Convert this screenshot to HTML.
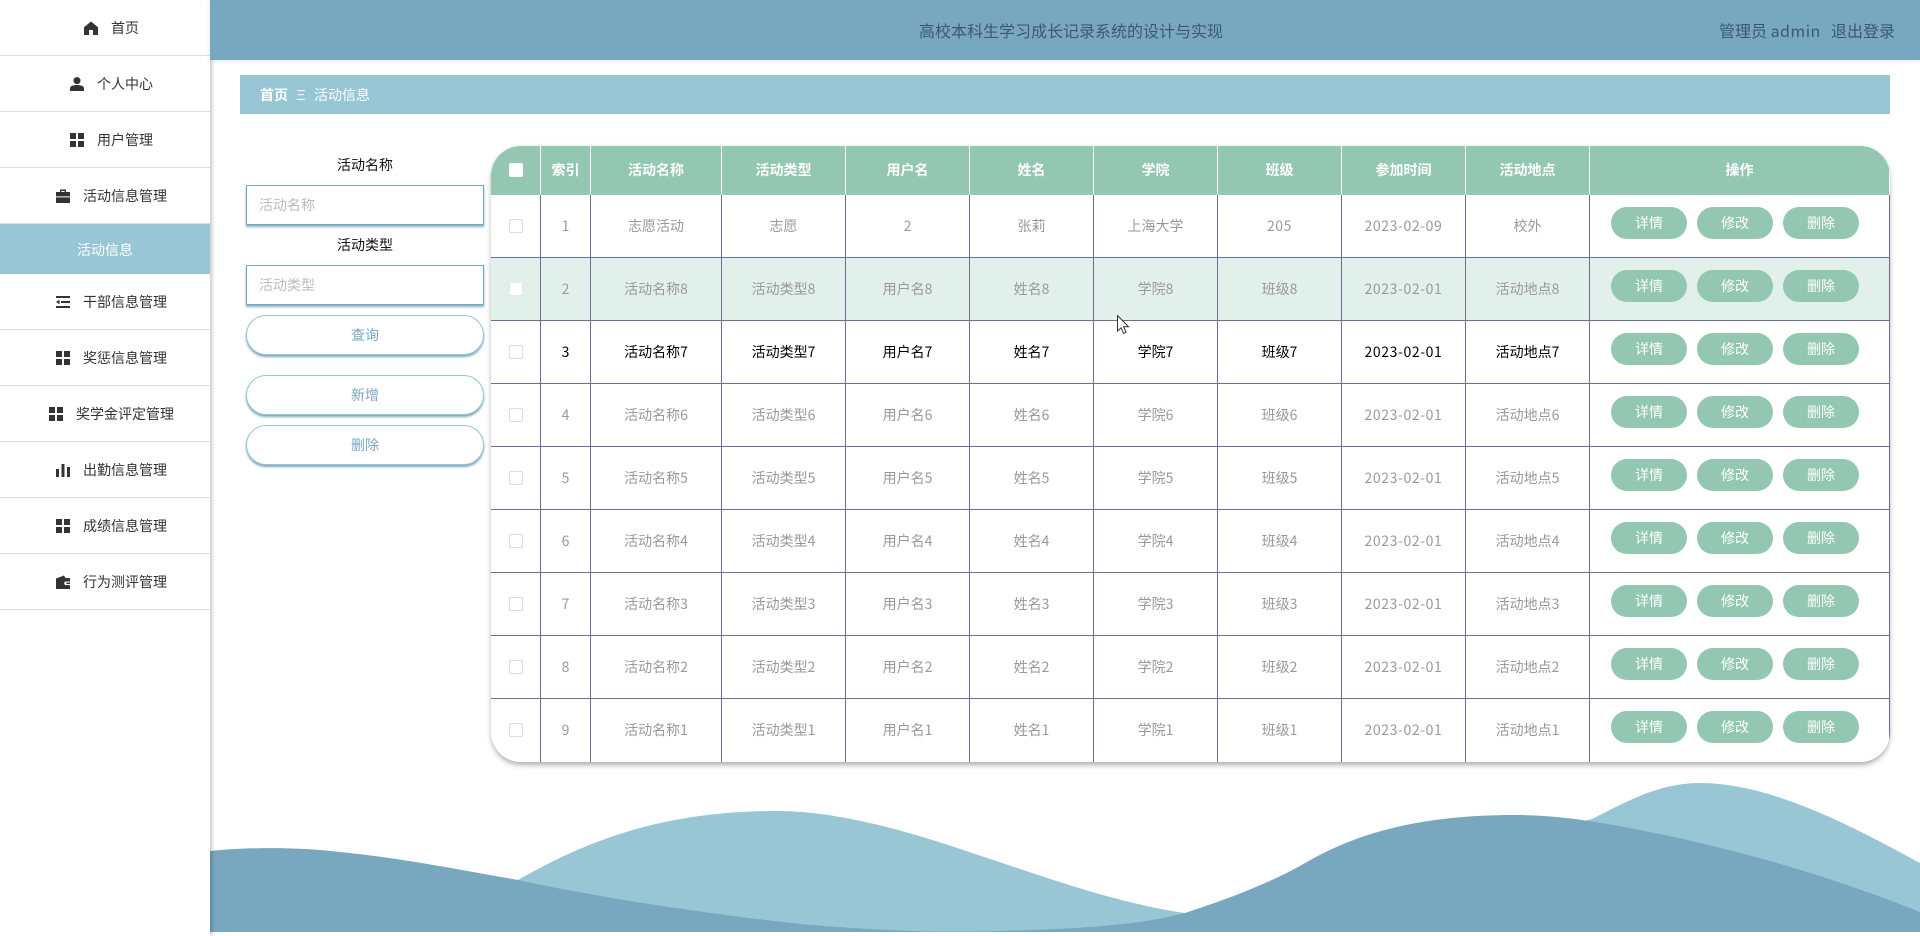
<!DOCTYPE html>
<html lang="zh-CN">
<head>
<meta charset="utf-8">
<title>活动信息</title>
<style>
*{box-sizing:border-box;margin:0;padding:0}
html,body{width:1920px;height:936px;overflow:hidden;background:#fff}
body{position:relative;font-family:"Noto Sans CJK SC","Liberation Sans",sans-serif;font-size:14px;color:#333}
.side{position:absolute;left:0;top:0;width:210px;height:936px;background:#fff;box-shadow:2px 0 4px rgba(0,0,0,.22);z-index:3}
.it{height:56px;border-bottom:1px solid #dcdcdc;display:flex;align-items:center;justify-content:center;padding-left:13px;color:#333;line-height:20px}
.it svg{width:14px;height:14px;margin-right:13px;fill:#333;flex:none}
.it.on{height:50px;background:#98c6d4;color:#fff;border:0;padding-left:0;padding-top:1px}
.top{position:absolute;left:210px;top:0;width:1710px;height:60px;background:#78a8c0;box-shadow:0 1px 4px rgba(120,168,192,.25);z-index:4;color:#3d5872;font-size:16px;line-height:60px}
.top .t{position:absolute;left:709px;top:0;white-space:nowrap}
.top .a{position:absolute;left:1509px;top:0;white-space:nowrap}
.top .a i{font-style:normal;letter-spacing:.45px}
.top .b{position:absolute;left:1621px;top:0;white-space:nowrap}
.crumb{position:absolute;left:240px;top:75px;width:1650px;height:39px;background:#98c6d4;color:#fff;line-height:41px}
.crumb span{position:absolute;top:0;white-space:nowrap}
.lab{position:absolute;left:246px;width:238px;text-align:center;color:#111;line-height:20px}
.inp{position:absolute;left:246px;width:238px;height:40px;border:1px solid #78a8c0;box-shadow:0 2px 2px rgba(120,168,192,.9);background:#fff;color:#bbb;line-height:38px;padding-left:12px}
.btn{position:absolute;left:246px;width:238px;height:40px;border:1px solid #98c6d4;border-radius:20px;box-shadow:0 2px 2px #78a8c0;background:#fff;color:#78a8c0;text-align:center;line-height:38px}
.box{position:absolute;left:491px;top:146px;width:1399px;height:616px;border-radius:30px;overflow:hidden;background:#fff}
.sh{position:absolute;left:491px;top:146px;width:1399px;height:616px;border-radius:30px;box-shadow:0 4px 6px -1px rgba(0,0,0,.3),0 0 5px rgba(0,0,0,.08)}
table{border-collapse:separate;border-spacing:0;table-layout:fixed;width:1399px}
th{height:49px;background:#93c7b1;color:#fff;font-weight:700;border-right:1px solid #fff;line-height:48px;padding:0;text-align:center;vertical-align:top}
td{height:63px;border-right:1px solid #6d6d90;border-bottom:1px solid #6d6d90;color:#999;text-align:center;line-height:62px;padding:0;vertical-align:top}
td.d{letter-spacing:.6px}
tr:last-child td{border-bottom:0}
tr.s td{background:#e2f0eb}
tr.h td{color:#000}
.c{display:inline-block;width:14px;height:14px;background:#fff;border:1px solid #dcdcdc;border-radius:2px;vertical-align:middle;margin-top:-2px}
tr.s .c{border-color:#e8e8e8}
th .c{border:0}
.ops{display:flex;padding:12px 0 0 21px;gap:10px}
.ops b{display:block;width:76px;height:32px;border-radius:16px;background:#93c7b1;color:#fff;font-weight:400;line-height:33px;text-align:center}
.wave{position:absolute;left:210px;top:760px;z-index:1}
.cur{position:absolute;left:1117px;top:315px;z-index:9}
</style>
</head>
<body>
<svg class="wave" width="1710" height="176" viewBox="210 760 1710 176">
<path fill="#98c6d4" d="M518 880C575 848 650 811 778 811C835 811 905 830 969 852C1040 875 1110 902 1185 913L1592 819C1630 800 1660 783 1700 783C1770 783 1850 825 1920 863V932H518Z"/>
<path fill="#78a8c0" d="M210 851C240 848 290 846 340 852C400 858 450 868 518 880C610 900 720 915 800 924C880 931 950 933 1000 931C1080 929 1140 925 1185 913C1225 900 1265 885 1300 866C1340 842 1400 815 1514 815C1560 815 1600 822 1650 832C1750 852 1840 880 1920 912V932H210Z"/>
</svg>

<div class="side">
<div class="it"><svg viewBox="0 0 14 14"><path d="M7 .5 14 6.2V14H9V9H5V14H0V6.2Z"/></svg>首页</div>
<div class="it"><svg viewBox="0 0 14 14"><circle cx="7" cy="3.6" r="3.5"/><path d="M0 14V11.5C0 9 3 8 7 8S14 9 14 11.5V14Z"/></svg>个人中心</div>
<div class="it"><svg viewBox="0 0 14 14"><path d="M0 0H6V6H0ZM8 0H14V6H8ZM0 8H6V14H0ZM8 8H14V14H8Z"/></svg>用户管理</div>
<div class="it"><svg viewBox="0 0 14 14"><path d="M4 3V0.5H10V3H8.6V2H5.4V3ZM0 3H14V7.4H0ZM0 8.4H14V14H0Z"/></svg>活动信息管理</div>
<div class="it on">活动信息</div>
<div class="it"><svg viewBox="0 0 14 14"><path d="M0 1H14V3H0ZM5 6H14V8H5ZM0 11H14V13H0ZM3.5 4.6V9.4L0 7Z"/></svg>干部信息管理</div>
<div class="it"><svg viewBox="0 0 14 14"><path d="M0 0H6V6H0ZM8 0H14V6H8ZM0 8H6V14H0ZM8 8H14V14H8Z"/></svg>奖惩信息管理</div>
<div class="it"><svg viewBox="0 0 14 14"><path d="M0 0H6V6H0ZM8 0H14V6H8ZM0 8H6V14H0ZM8 8H14V14H8Z"/></svg>奖学金评定管理</div>
<div class="it"><svg viewBox="0 0 14 14"><path d="M0 6H3V14H0ZM5.5 1H8.5V14H5.5ZM11 4H14V14H11Z"/></svg>出勤信息管理</div>
<div class="it"><svg viewBox="0 0 14 14"><path d="M0 0H6V6H0ZM8 0H14V6H8ZM0 8H6V14H0ZM8 8H14V14H8Z"/></svg>成绩信息管理</div>
<div class="it"><svg viewBox="0 0 14 14"><path d="M0 3.5 8 .5 9.5 3H14V6.5H10A1.8 1.8 0 0 0 10 10.1H14V14H0ZM10.5 7.5H14V9H10.5Z"/></svg>行为测评管理</div>
</div>

<div class="top">
<span class="t">高校本科生学习成长记录系统的设计与实现</span>
<span class="a">管理员 <i>admin</i></span>
<span class="b">退出登录</span>
</div>

<div class="crumb">
<span style="left:20px;font-weight:700">首页</span>
<span style="left:56px;font-family:'Liberation Sans',sans-serif;font-size:15px;opacity:.85">Ξ</span>
<span style="left:74px">活动信息</span>
</div>

<div class="lab" style="top:155px">活动名称</div>
<div class="inp" style="top:185px">活动名称</div>
<div class="lab" style="top:235px">活动类型</div>
<div class="inp" style="top:265px">活动类型</div>
<div class="btn" style="top:315px">查询</div>
<div class="btn" style="top:375px">新增</div>
<div class="btn" style="top:425px">删除</div>

<div class="sh"></div>
<div class="box">
<table>
<colgroup><col style="width:50px"><col style="width:50px"><col style="width:131px"><col style="width:124px"><col style="width:124px"><col style="width:124px"><col style="width:124px"><col style="width:124px"><col style="width:124px"><col style="width:124px"><col style="width:300px"></colgroup>
<tr><th><i class="c"></i></th><th>索引</th><th>活动名称</th><th>活动类型</th><th>用户名</th><th>姓名</th><th>学院</th><th>班级</th><th>参加时间</th><th>活动地点</th><th>操作</th></tr>
<tr><td><i class="c"></i></td><td>1</td><td>志愿活动</td><td>志愿</td><td>2</td><td>张莉</td><td>上海大学</td><td class="d">205</td><td class="d">2023-02-09</td><td>校外</td><td><div class="ops"><b>详情</b><b>修改</b><b>删除</b></div></td></tr>
<tr class="s"><td><i class="c"></i></td><td>2</td><td>活动名称8</td><td>活动类型8</td><td>用户名8</td><td>姓名8</td><td>学院8</td><td>班级8</td><td class="d">2023-02-01</td><td>活动地点8</td><td><div class="ops"><b>详情</b><b>修改</b><b>删除</b></div></td></tr>
<tr class="h"><td><i class="c"></i></td><td>3</td><td>活动名称7</td><td>活动类型7</td><td>用户名7</td><td>姓名7</td><td>学院7</td><td>班级7</td><td class="d">2023-02-01</td><td>活动地点7</td><td><div class="ops"><b>详情</b><b>修改</b><b>删除</b></div></td></tr>
<tr><td><i class="c"></i></td><td>4</td><td>活动名称6</td><td>活动类型6</td><td>用户名6</td><td>姓名6</td><td>学院6</td><td>班级6</td><td class="d">2023-02-01</td><td>活动地点6</td><td><div class="ops"><b>详情</b><b>修改</b><b>删除</b></div></td></tr>
<tr><td><i class="c"></i></td><td>5</td><td>活动名称5</td><td>活动类型5</td><td>用户名5</td><td>姓名5</td><td>学院5</td><td>班级5</td><td class="d">2023-02-01</td><td>活动地点5</td><td><div class="ops"><b>详情</b><b>修改</b><b>删除</b></div></td></tr>
<tr><td><i class="c"></i></td><td>6</td><td>活动名称4</td><td>活动类型4</td><td>用户名4</td><td>姓名4</td><td>学院4</td><td>班级4</td><td class="d">2023-02-01</td><td>活动地点4</td><td><div class="ops"><b>详情</b><b>修改</b><b>删除</b></div></td></tr>
<tr><td><i class="c"></i></td><td>7</td><td>活动名称3</td><td>活动类型3</td><td>用户名3</td><td>姓名3</td><td>学院3</td><td>班级3</td><td class="d">2023-02-01</td><td>活动地点3</td><td><div class="ops"><b>详情</b><b>修改</b><b>删除</b></div></td></tr>
<tr><td><i class="c"></i></td><td>8</td><td>活动名称2</td><td>活动类型2</td><td>用户名2</td><td>姓名2</td><td>学院2</td><td>班级2</td><td class="d">2023-02-01</td><td>活动地点2</td><td><div class="ops"><b>详情</b><b>修改</b><b>删除</b></div></td></tr>
<tr><td><i class="c"></i></td><td>9</td><td>活动名称1</td><td>活动类型1</td><td>用户名1</td><td>姓名1</td><td>学院1</td><td>班级1</td><td class="d">2023-02-01</td><td>活动地点1</td><td><div class="ops"><b>详情</b><b>修改</b><b>删除</b></div></td></tr>
</table>
</div>

<svg class="cur" width="14" height="20" viewBox="0 0 14 20"><path d="M.5.5V16L4 12.8 6.5 18.5 9 17.4 6.6 11.8H11.5Z" fill="#fff" stroke="#333" stroke-width="1"/></svg>
</body>
</html>
